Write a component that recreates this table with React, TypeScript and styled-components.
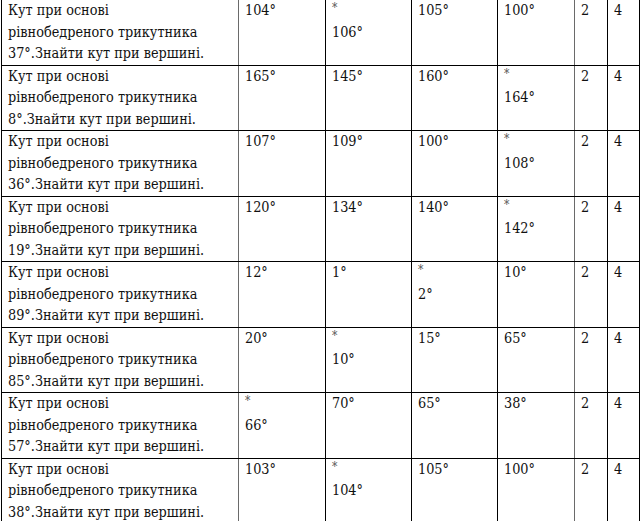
import { createGlobalStyle } from "styled-components";
import styled from "styled-components";

const GlobalStyle = createGlobalStyle`
  html, body {
    margin: 0;
    padding: 0;
    background: #ffffff;
  }
`;

const Sheet = styled.div`
  padding: 0 0 0 1px;
  margin-top: -1px;
`;

const Table = styled.table`
  border-collapse: collapse;
  table-layout: fixed;
  width: 638px;
  font-family: "DejaVu Serif", "Liberation Serif", serif;
  font-stretch: condensed;
  font-size: 14.3px;
  line-height: 21.5px;
  color: #111;
`;

const Row = styled.tr`
  height: 65px;
`;

const Cell = styled.td<{ $w: number; $gray?: boolean }>`
  box-sizing: border-box;
  width: ${(p) => p.$w}px;
  border: 1px solid #000;
  border-right-color: ${(p) => (p.$gray ? "#6a6a6a" : "#000")};
  vertical-align: top;
  padding: 0 4px 0 6px;
  white-space: nowrap;
  overflow: hidden;
`;

const Star = styled.span`
  display: block;
  font-size: 12px;
  color: #555;
  height: 21.5px;
  line-height: 17px;
`;

type Answer = { v: string; correct?: boolean };

type Question = {
  angle: string;
  answers: Answer[];
};

const questions: Question[] = [
  { angle: "37°", answers: [{ v: "104°" }, { v: "106°", correct: true }, { v: "105°" }, { v: "100°" }] },
  { angle: "8°", answers: [{ v: "165°" }, { v: "145°" }, { v: "160°" }, { v: "164°", correct: true }] },
  { angle: "36°", answers: [{ v: "107°" }, { v: "109°" }, { v: "100°" }, { v: "108°", correct: true }] },
  { angle: "19°", answers: [{ v: "120°" }, { v: "134°" }, { v: "140°" }, { v: "142°", correct: true }] },
  { angle: "89°", answers: [{ v: "12°" }, { v: "1°" }, { v: "2°", correct: true }, { v: "10°" }] },
  { angle: "85°", answers: [{ v: "20°" }, { v: "10°", correct: true }, { v: "15°" }, { v: "65°" }] },
  { angle: "57°", answers: [{ v: "66°", correct: true }, { v: "70°" }, { v: "65°" }, { v: "38°" }] },
  { angle: "38°", answers: [{ v: "103°" }, { v: "104°", correct: true }, { v: "105°" }, { v: "100°" }] },
];

const answerWidths = [87, 86, 86, 77];

export default function App() {
  return (
    <>
      <GlobalStyle />
      <Sheet>
        <Table>
          <tbody>
            {questions.map((q, i) => (
              <Row key={i}>
                <Cell $w={237} $gray>
                  Кут при основі
                  <br />
                  рівнобедреного трикутника
                  <br />
                  {q.angle}.Знайти кут при вершині.
                </Cell>
                {q.answers.map((a, j) => (
                  <Cell key={j} $w={answerWidths[j]} $gray={j === 3}>
                    {a.correct && <Star>*</Star>}
                    {a.v}
                  </Cell>
                ))}
                <Cell $w={33}>2</Cell>
                <Cell $w={32}>4</Cell>
              </Row>
            ))}
          </tbody>
        </Table>
      </Sheet>
    </>
  );
}
